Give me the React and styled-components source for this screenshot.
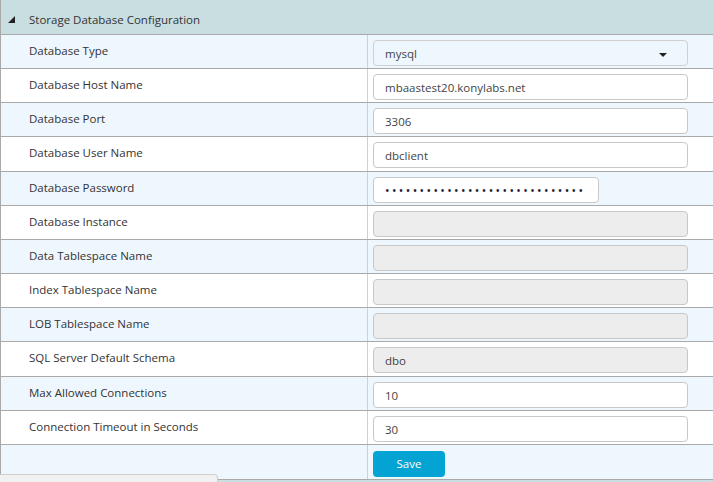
import styled, { createGlobalStyle } from "styled-components";

const GlobalStyle = createGlobalStyle`
    html, body {
        margin: 0;
        padding: 0;
        background: #ffffff;
        overflow: hidden;
    }
    body {
        font-family: "Open Sans", "Noto Sans", "Liberation Sans", sans-serif;
        font-size: 11.5px;
        color: #333333;
    }
`

const Page = styled.div`
    position: relative;
    width: 713px;
    height: 482px;
    overflow: hidden;
`
const Section = styled.div`
    border-left: 1px solid #a9a9a9;
`
const Header = styled.div`
    height: 30px;
    padding-top: 4px;
    display: flex;
    align-items: center;
    gap: 14px;
    padding-left: 7px;
    background-color: #c9dee1;
    border-bottom: 1px solid #a9a9a9;
    color: #333;
`
const Toggle = styled.span`
    width: 0;
    height: 0;
    border-left: 7px solid transparent;
    border-bottom: 7px solid #222;
    margin-top: 1px;
`
const Row = styled.div`
    display: grid;
    grid-template-columns: 367px 1fr;
    height: ${props => props.h || 34.17}px;
    box-sizing: border-box;
    border-bottom: 1px solid #a9a9a9;
    background-color: ${props => props.alt ? "#eff7fe" : "#ffffff"};
`
const Label = styled.div`
    padding: 8px 0 0 28px;
    line-height: 16px;
    border-right: 1px solid #d0d0d0;
    color: #333;
`
const Field = styled.div`
    padding: 5px 0 0 5px;
`
const Input = styled.input`
    box-sizing: border-box;
    width: ${props => props.w || 315}px;
    height: 26px;
    padding: 1px 11px 0;
    border: 1px solid #c8c8c8;
    border-radius: 4px;
    background-color: ${props => props.disabled ? "#ededed" : "#ffffff"};
    font-family: inherit;
    font-size: 11.5px;
    color: #444;
    outline: none;
    &[type="password"] {
        font-size: 12px;
        letter-spacing: 2.4px;
        color: #223;
    }
`
const SelectBox = styled.div`
    box-sizing: border-box;
    width: 315px;
    height: 26px;
    display: flex;
    align-items: center;
    justify-content: space-between;
    padding: 1px 20px 0 11px;
    border: 1px solid #d0d0d0;
    border-radius: 4px;
    color: #444;
`
const Caret = styled.span`
    width: 0;
    height: 0;
    border-left: 4px solid transparent;
    border-right: 4px solid transparent;
    border-top: 4px solid #222;
    margin-top: 2px;
`
const SaveButton = styled.button`
    width: 72px;
    height: 26px;
    margin-top: 1px;
    border: 0;
    border-radius: 4px;
    background-color: #03a4d4;
    color: #ffffff;
    font-family: inherit;
    font-size: 11.5px;
    cursor: pointer;
`
const StatusTip = styled.div`
    position: absolute;
    left: 0;
    bottom: -14px;
    width: 218px;
    height: 22px;
    box-sizing: border-box;
    padding: 4px 0 0 3px;
    background-color: #f1f1f1;
    border: 1px solid #cfcfcf;
    border-left: 0;
    border-radius: 0 4px 0 0;
    font-size: 11px;
    color: #444;
    white-space: nowrap;
    overflow: hidden;
`

const fields = [
    { label: "Database Type", kind: "select", value: "mysql" },
    { label: "Database Host Name", value: "mbaastest20.konylabs.net" },
    { label: "Database Port", value: "3306" },
    { label: "Database User Name", value: "dbclient" },
    { label: "Database Password", kind: "password", value: "abcdefghijklmnopqrstuvwxyz123" },
    { label: "Database Instance", value: "", disabled: true },
    { label: "Data Tablespace Name", value: "", disabled: true },
    { label: "Index Tablespace Name", value: "", disabled: true },
    { label: "LOB Tablespace Name", value: "", disabled: true },
    { label: "SQL Server Default Schema", value: "dbo", disabled: true },
    { label: "Max Allowed Connections", value: "10" },
    { label: "Connection Timeout in Seconds", value: "30" },
]

function renderField(f) {
    if (f.kind === "select") {
        return <SelectBox>{f.value}<Caret /></SelectBox>
    }
    if (f.kind === "password") {
        return <Input type="password" w={226} defaultValue={f.value} />
    }
    return <Input type="text" defaultValue={f.value} disabled={f.disabled} />
}

function App() {
    return (
        <Page>
            <GlobalStyle />
            <Section>
                <Header><Toggle />Storage Database Configuration</Header>
                {fields.map((f, i) => (
                    <Row key={f.label} alt={i % 2 === 0}>
                        <Label>{f.label}</Label>
                        <Field>{renderField(f)}</Field>
                    </Row>
                ))}
                <Row alt h={35}>
                    <Label />
                    <Field><SaveButton>Save</SaveButton></Field>
                </Row>
                <Header />
            </Section>
            <StatusTip>javascript:void(0) - Add more database settings</StatusTip>
        </Page>
    )
}

export default App;
